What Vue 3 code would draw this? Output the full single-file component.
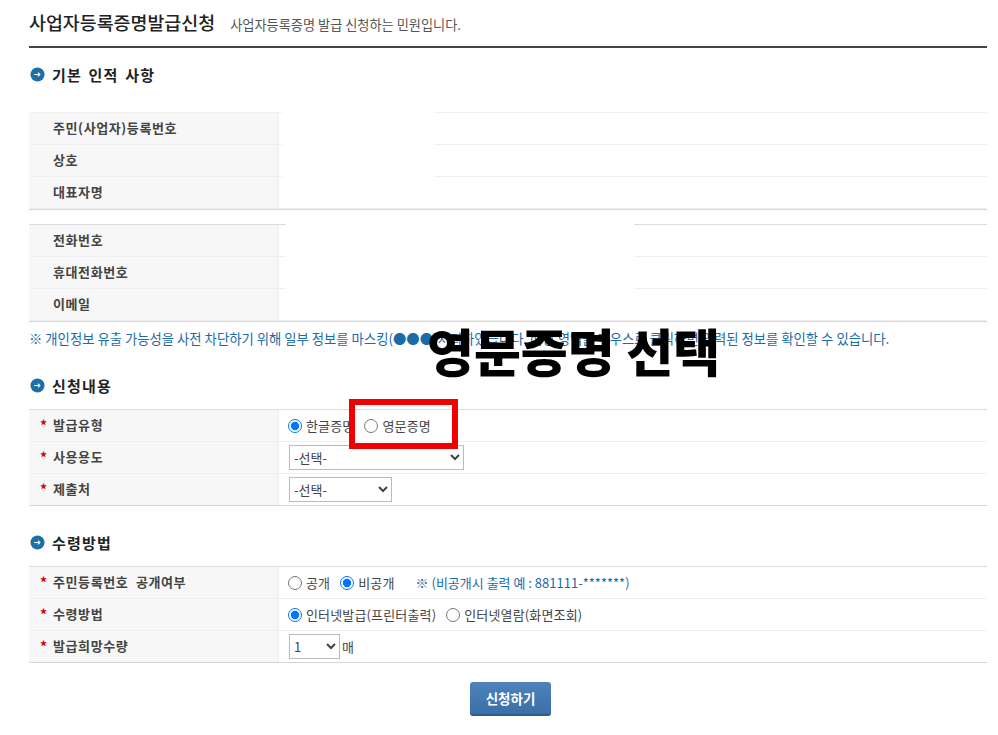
<template>
  <div class="page">
    <header class="page-head">
      <h1>사업자등록증명발급신청</h1>
      <p>사업자등록증명 발급 신청하는 민원입니다.</p>
    </header>

    <h2 class="section first">
      <svg class="bullet" viewBox="0 0 16 16" aria-hidden="true">
        <circle cx="8" cy="8" r="7.5" fill="#1d6fa8" />
        <path d="M4.5 8h6M8.5 6l2 2-2 2" fill="none" stroke="#fff" stroke-width="1.2" />
      </svg>
      기본 인적 사항
    </h2>

    <div class="table soft">
      <div class="row" v-for="label in basicRows" :key="label">
        <div class="th">{{ label }}</div>
        <div class="td"></div>
      </div>
      <div class="mask mask-a"></div>
    </div>

    <div class="table second">
      <div class="row" v-for="label in contactRows" :key="label">
        <div class="th">{{ label }}</div>
        <div class="td"></div>
      </div>
      <div class="mask mask-b"></div>
    </div>

    <div class="note-wrap">
      <p class="note">※ 개인정보 유출 가능성을 사전 차단하기 위해 일부 정보를 마스킹(●●●)처리하였습니다. 해당 영역을 마우스로 클릭하면 입력된 정보를 확인할 수 있습니다.</p>
      <strong class="caption">영문증명 선택</strong>
    </div>

    <h2 class="section">
      <svg class="bullet" viewBox="0 0 16 16" aria-hidden="true">
        <circle cx="8" cy="8" r="7.5" fill="#1d6fa8" />
        <path d="M4.5 8h6M8.5 6l2 2-2 2" fill="none" stroke="#fff" stroke-width="1.2" />
      </svg>
      신청내용
    </h2>

    <div class="table">
      <div class="row">
        <div class="th req">발급유형</div>
        <div class="td">
          <label class="radio"><input type="radio" name="kind" checked />한글증명</label>
          <label class="radio"><input type="radio" name="kind" />영문증명</label>
          <span class="highlight"></span>
        </div>
      </div>
      <div class="row">
        <div class="th req">사용용도</div>
        <div class="td"><select class="sel-wide"><option>-선택-</option></select></div>
      </div>
      <div class="row">
        <div class="th req">제출처</div>
        <div class="td"><select class="sel-mid"><option>-선택-</option></select></div>
      </div>
    </div>

    <h2 class="section third">
      <svg class="bullet" viewBox="0 0 16 16" aria-hidden="true">
        <circle cx="8" cy="8" r="7.5" fill="#1d6fa8" />
        <path d="M4.5 8h6M8.5 6l2 2-2 2" fill="none" stroke="#fff" stroke-width="1.2" />
      </svg>
      수령방법
    </h2>

    <div class="table">
      <div class="row">
        <div class="th req">주민등록번호 공개여부</div>
        <div class="td">
          <label class="radio"><input type="radio" name="open" />공개</label>
          <label class="radio"><input type="radio" name="open" checked />비공개</label>
          <span class="example">※ (비공개시 출력 예 : 881111-*******)</span>
        </div>
      </div>
      <div class="row">
        <div class="th req">수령방법</div>
        <div class="td">
          <label class="radio"><input type="radio" name="recv" checked />인터넷발급(프린터출력)</label>
          <label class="radio"><input type="radio" name="recv" />인터넷열람(화면조회)</label>
        </div>
      </div>
      <div class="row">
        <div class="th req">발급희망수량</div>
        <div class="td">
          <select class="sel-num"><option>1</option><option>2</option><option>3</option></select>
          <span class="unit">매</span>
        </div>
      </div>
    </div>

    <div class="actions">
      <button type="button" class="submit">신청하기</button>
    </div>
  </div>
</template>

<script setup>
const basicRows = ['주민(사업자)등록번호', '상호', '대표자명']
const contactRows = ['전화번호', '휴대전화번호', '이메일']
</script>

<style>
html,
body {
  background: #fff;
}
</style>

<style scoped>
.page {
  box-sizing: border-box;
  width: 998px;
  height: 735px;
  padding: 0 11px 0 29px;
  overflow: hidden;
  font-family: "Noto Sans CJK KR", "Noto Sans", sans-serif;
  font-size: 13px;
  color: #444;
}
.page-head {
  display: flex;
  align-items: baseline;
  gap: 15px;
  height: 46px;
  border-bottom: 2px solid #444;
}
.page-head h1 {
  margin: 9px 0 0;
  font-size: 18.4px;
  line-height: 26px;
  font-weight: 500;
  color: #222;
}
.page-head p {
  margin: 0;
  font-size: 13.2px;
  color: #555;
}
.section {
  display: flex;
  align-items: center;
  gap: 7px;
  height: 20px;
  margin: 0 0 14px 1px;
  font-size: 15px;
  font-weight: 700;
  letter-spacing: 1.2px;
  word-spacing: 2px;
  color: #222;
}
.section.first {
  margin-top: 16px;
  margin-bottom: 28px;
}
.section.third {
  margin-top: 26px;
}
.bullet {
  width: 15px;
  height: 15px;
  flex: none;
}
.table {
  position: relative;
  border-top: 1px solid #ddd;
  border-bottom: 1px solid #d5d5d5;
}
.table.soft {
  border-top-color: #f1f1f1;
}
.table.second {
  margin-top: 14px;
}
.row {
  display: flex;
  height: 31px;
  border-bottom: 1px solid #efefef;
}
.row:last-child {
  border-bottom: 0;
}
.th {
  box-sizing: border-box;
  flex: none;
  display: flex;
  align-items: center;
  width: 250px;
  padding: 0 0 2px 24px;
  background: #f7f7f7;
  border-right: 2px solid #f2f2f2;
  font-size: 13px;
  font-weight: 700;
  letter-spacing: 0.6px;
  word-spacing: 4px;
  white-space: pre;
  color: #444;
}
.th.req {
  position: relative;
}
.th.req::before {
  content: "*";
  position: absolute;
  left: 11px;
  top: 8px;
  font-size: 14px;
  line-height: 14px;
  color: #d40000;
}
.td {
  position: relative;
  flex: 1;
  display: flex;
  align-items: center;
  padding-left: 9px;
  color: #444;
}
.radio {
  display: inline-flex;
  align-items: center;
  gap: 4px;
  margin-right: 10px;
  letter-spacing: 0.15px;
}
.radio input {
  margin: 0;
  width: 14px;
  height: 14px;
}
.highlight {
  box-sizing: border-box;
  position: absolute;
  z-index: 2;
  left: 70px;
  top: -11px;
  width: 109px;
  height: 50px;
  border: 6px solid #f00000;
}
.example {
  margin-left: 11px;
  color: #1a6ca8;
}
.unit {
  margin-left: 2px;
}
select {
  height: 25px;
  margin-left: 1px;
  font-family: inherit;
  font-size: 13px;
  color: #444;
  background: #fff;
  border: 1px solid #bbb;
}
.sel-wide {
  width: 175px;
}
.sel-mid {
  width: 103px;
}
.sel-num {
  width: 51px;
}
.mask {
  position: absolute;
  background: #fff;
}
.mask-a {
  left: 253px;
  top: -1px;
  width: 152px;
  height: 94px;
}
.mask-b {
  left: 257px;
  top: -1px;
  width: 348px;
  height: 93px;
}
.note-wrap {
  position: relative;
  height: 53px;
}
.note {
  margin: 0;
  padding: 8px 0 0;
  font-size: 13.35px;
  line-height: 18px;
  white-space: nowrap;
  color: #1a6ca8;
}
.caption {
  position: absolute;
  left: 398px;
  top: -3px;
  font-size: 51px;
  line-height: 62px;
  font-weight: 900;
  color: #000;
  white-space: nowrap;
}
.actions {
  display: flex;
  justify-content: center;
  margin-top: 19px;
  padding-left: 5px;
}
.submit {
  width: 81px;
  height: 34px;
  border: 0;
  border-bottom: 2px solid #2b5c90;
  border-radius: 3px;
  background: linear-gradient(#4d82ba, #3a6fa8);
  color: #fff;
  font-family: inherit;
  font-size: 13.5px;
  font-weight: 700;
}
</style>
